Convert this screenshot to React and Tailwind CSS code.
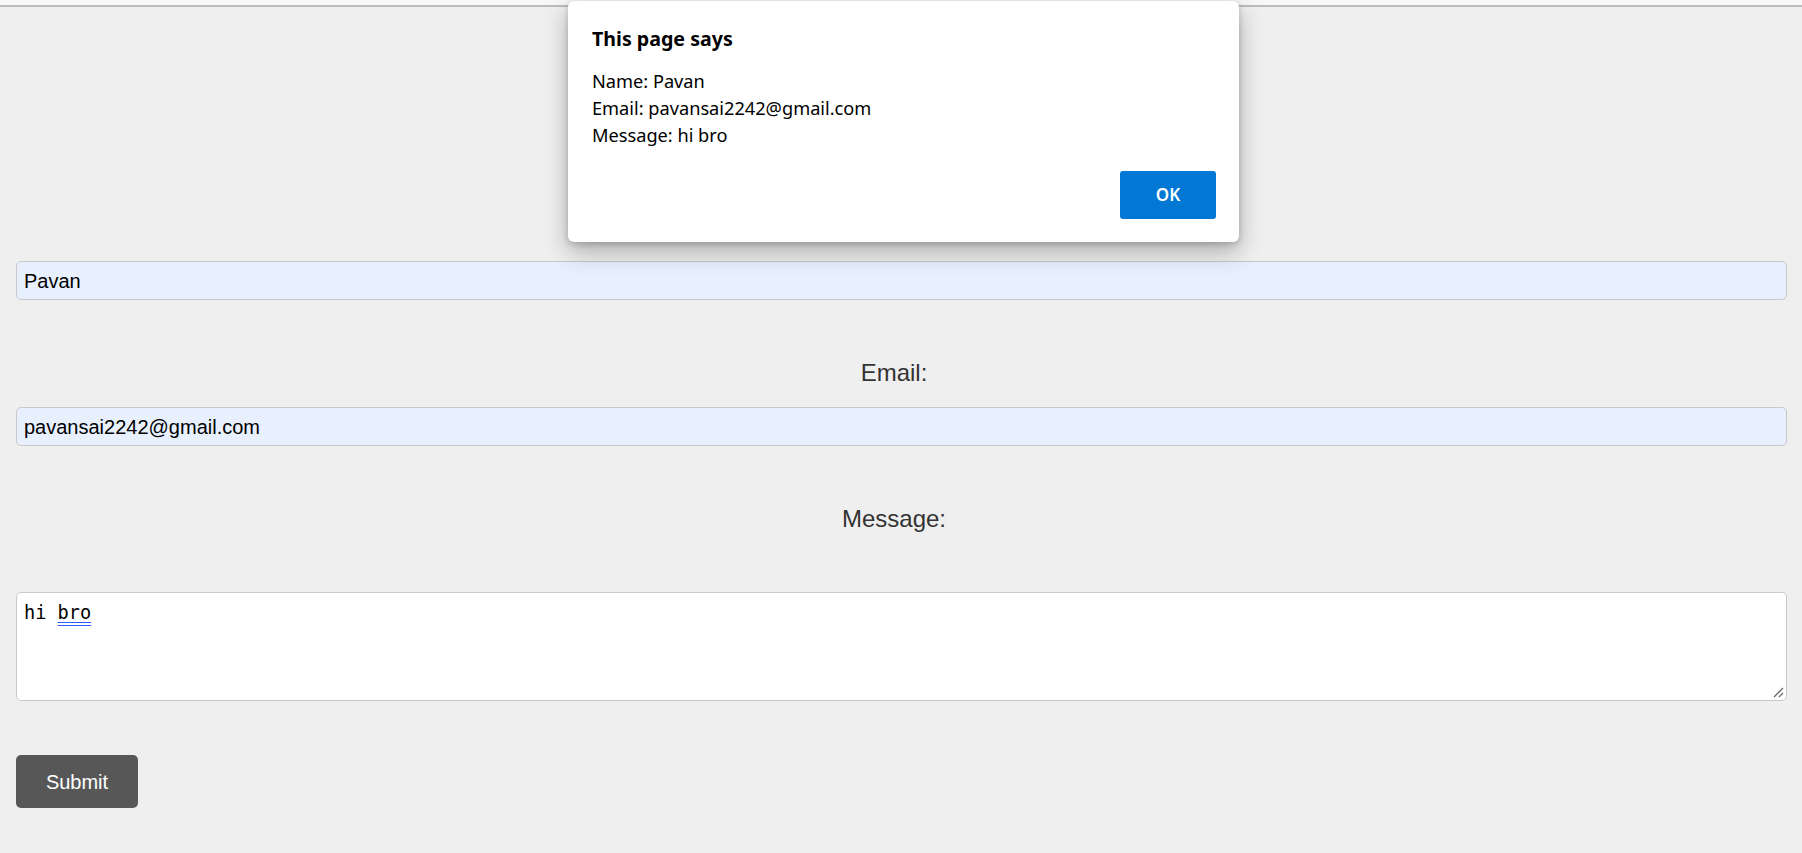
import React from 'react';

const Field = ({ label, value }) => (
  <>
    <label className="block text-center text-[24px] leading-[28px] text-[#333] pr-[15px]">{label}</label>
    <div className="mt-[20px] h-[39px] flex items-center border border-[#c9c9cc] rounded-[5px] bg-[#e8f0fe] px-[7px] text-[20px] text-black">
      {value}
    </div>
  </>
);

const AlertDialog = () => (
  <div className="absolute left-[568px] top-[1px] w-[671px] bg-white rounded-[6px] shadow-[0_10px_24px_rgba(0,0,0,0.28),0_2px_6px_rgba(0,0,0,0.18)] pl-[24px] pr-[23px] pt-[24px] pb-[23px] font-['Noto_Sans',sans-serif] text-black">
    <div className="text-[19.6px] leading-[27px] font-bold">This page says</div>
    <div className="mt-[16px] text-[18.2px] leading-[27px]">
      <div>Name: Pavan</div>
      <div>Email: pavansai2242@gmail.com</div>
      <div>Message: hi bro</div>
    </div>
    <div className="mt-[22px] flex justify-end">
      <button className="w-[96px] h-[48px] bg-[#0078d4] rounded-[3px] text-white text-[17px] font-semibold">OK</button>
    </div>
  </div>
);

export default function App() {
  return (
    <div className="relative min-h-[853px] bg-[#efefef] font-['Liberation_Sans',Arial,sans-serif]">
      <div className="h-[7px] bg-[#f7f7f7] border-b-2 border-[#bdbdbd]" />

      <form className="pl-[16px] pr-[15px]" onSubmit={(e) => e.preventDefault()}>
        <div className="mt-[206px]">
          <Field label="Name:" value="Pavan" />
        </div>
        <div className="mt-[59px]">
          <Field label="Email:" value="pavansai2242@gmail.com" />
        </div>

        <label className="mt-[59px] block text-center text-[24px] leading-[28px] text-[#333] pr-[15px]">Message:</label>
        <div className="relative mt-[59px] h-[109px] bg-white border border-[#c9c9cc] rounded-[5px] pl-[7px] pt-[9px] font-['DejaVu_Sans_Mono',monospace] text-[18.6px] leading-[22px] text-black">
          hi{' '}
          <span className="underline decoration-double decoration-[#2f5bff] underline-offset-[3px]">bro</span>
          <svg className="absolute right-[2px] bottom-[2px]" width="12" height="12" viewBox="0 0 12 12">
            <path d="M11 2 L2 11 M11 7 L7 11" stroke="#6b6b6b" strokeWidth="1.3" />
          </svg>
        </div>

        <button type="submit" className="mt-[54px] w-[122px] h-[53px] bg-[#575757] rounded-[5px] text-white text-[20px]">
          Submit
        </button>
      </form>

      <AlertDialog />
    </div>
  );
}
